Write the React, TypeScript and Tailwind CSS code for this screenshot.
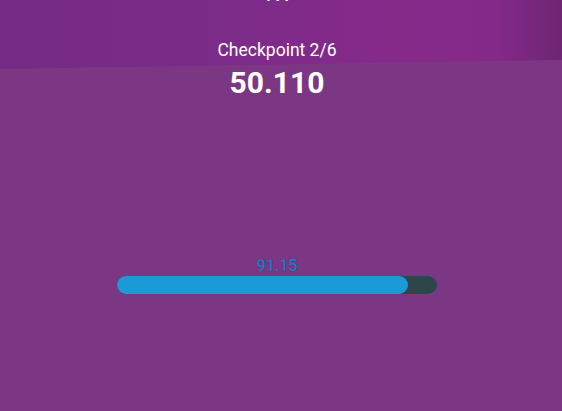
export default function App() {
  const value = 91.15;
  const pct = 91;

  return (
    <div
      className="relative h-[411px] w-[562px] overflow-hidden bg-[#7c3784] font-['Roboto',sans-serif]"
    >
      {/* blurred band behind the header */}
      <div className="absolute inset-x-0 top-0 h-[70px] bg-[linear-gradient(90deg,#752b86_0%,#7a2b88_35%,#862a8a_70%,#84298a_88%,#6e2572_100%)] [clip-path:polygon(0_0,100%_0,100%_60px,0_69px)]" />

      <div className="relative flex w-[554px] flex-col items-center">
        <div className="-mt-[13px] h-[18px] text-[16px] font-bold leading-[18px] text-white">111</div>
        <div className="mt-[35px] text-[17.5px] leading-[20px] text-white">Checkpoint 2/6</div>
        <div className="mt-[6px] text-[30px] font-bold leading-[34px] text-white">50.110</div>

        <div className="mt-[157px] flex w-[320px] flex-col items-center">
          <div className="text-[16px] font-medium leading-[18px] text-[#2f76bf] [text-shadow:0_0_1px_#213563]">{value}</div>
          <div className="mt-[1px] h-[18px] w-full rounded-full bg-[#2d454b]">
            <div className="h-full rounded-full bg-[#1b9ad6]" style={{ width: `${pct}%` }} />
          </div>
        </div>
      </div>
    </div>
  );
}
